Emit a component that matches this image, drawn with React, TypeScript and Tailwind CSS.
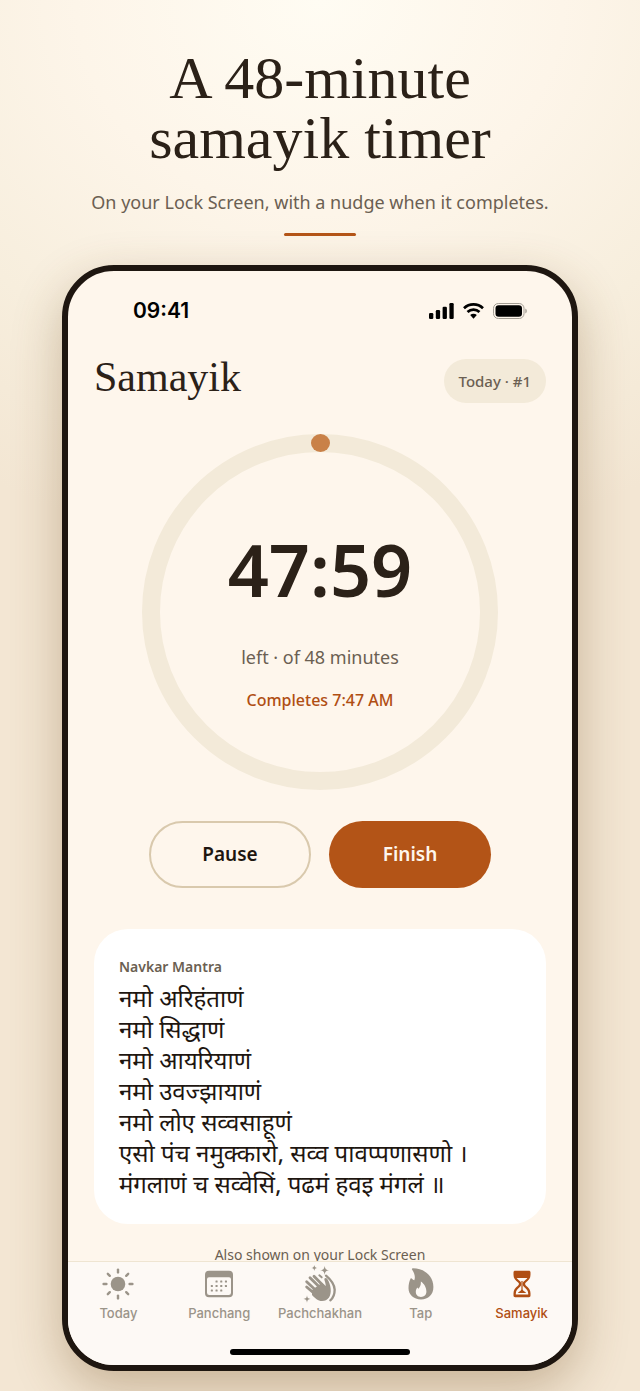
import type { ReactElement } from "react"
import clsx from "clsx"

interface Tab {
  label: string
  icon: ReactElement
  active?: boolean
}

const mantra: string[] = [
  "नमो अरिहंताणं",
  "नमो सिद्धाणं",
  "नमो आयरियाणं",
  "नमो उवज्झायाणं",
  "नमो लोए सव्वसाहूणं",
  "एसो पंच नमुक्कारो, सव्व पावप्पणासणो ।",
  "मंगलाणं च सव्वेसिं, पढमं हवइ मंगलं ॥",
]

function SunIcon() {
  const angles = [0, 45, 90, 135, 180, 225, 270, 315]
  return (
    <svg viewBox="0 0 32 32" className="size-8" fill="currentColor" aria-hidden="true">
      <circle cx="16" cy="16" r="7.3" />
      {angles.map((a) => (
        <rect key={a} x="14.8" y="0.4" width="2.4" height="5.2" rx="1.2" transform={`rotate(${a} 16 16)`} />
      ))}
    </svg>
  )
}

function CalendarIcon() {
  const dots = [
    [12.5, 11.5], [17.2, 11.5], [21.9, 11.5],
    [7.8, 16], [12.5, 16], [17.2, 16], [21.9, 16],
    [7.8, 20.5], [12.5, 20.5], [17.2, 20.5],
  ]
  return (
    <svg viewBox="0 0 30 28" className="h-7 w-[30px]" fill="currentColor" aria-hidden="true">
      <path
        fillRule="evenodd"
        d="M5 .7h20a4 4 0 0 1 4 4v18.600a4 4 0 0 1-4 4H5a4 4 0 0 1-4-4V4.700a4 4 0 0 1 4-4ZM5 7.300A2 2 0 0 0 3 9.300v13.400A2.300 2.300 0 0 0 5.300 25h19.400A2.300 2.300 0 0 0 27 22.700V9.300a2 2 0 0 0-2-2Z"
      />
      {dots.map(([x, y]) => (
        <rect key={`${x}-${y}`} x={x - 1} y={y - 1} width="2.1" height="2.1" rx="0.5" />
      ))}
    </svg>
  )
}

function ClapIcon() {
  return (
    <svg viewBox="20 10 108 117" className="h-[39px] w-9" fill="currentColor" aria-hidden="true">
      <path d="M57 13c1 6 3 8 9 9-6 1-8 3-9 9-1-6-3-8-9-9 6-1 8-3 9-9Z" />
      <path d="M88 15c1.500 10 4 12.500 14 14-10 1.500-12.500 4-14 14-1.500-10-4-12.500-14-14 10-1.500 12.500-4 14-14Z" />
      <path d="M35 104c1 8 3 10 11 11-8 1-10 3-11 11-1-8-3-10-11-11 8-1 10-3 11-11Z" />
      <g fill="none" stroke="currentColor" strokeWidth="8.5" strokeLinecap="round">
        <path d="M56 47 84 75" />
        <path d="M44 51 76 83" />
        <path d="M34 63 66 93" />
        <path d="M34 79 64 104" />
      </g>
      <path d="M50 88 80 66 91 76C92 69 87 60 87 55c1-4 6-4 9 0 5 8 9 18 10 29 2 22-8 37-26 37-12 0-21-8-30-18Z" />
      <g fill="none" stroke="currentColor" strokeLinecap="round">
        <path d="M72 44 79 50" strokeWidth="6" />
        <path d="M92 45C104 55 117 69 118 87c0 14-4 24-13 32" strokeWidth="7" />
      </g>
    </svg>
  )
}

function FlameIcon() {
  return (
    <svg viewBox="0 0 26 32" className="h-8 w-[26px]" fill="currentColor" aria-hidden="true">
      <path
        fillRule="evenodd"
        d="M4 1.500C3.600.8 4.100.3 5 .3 16 .3 25.400 7.800 25.400 19 25.400 26.600 20.300 31.400 13 31.400 5.700 31.400.5 26.800.5 20.300c0-3.800.8-7 2-9.500.4-.7 1.100-.6 1.500 0 .6.9 1.400 1.400 2.300 1.400C7.700 8.600 6.200 4.800 4 1.500ZM12.800 13.600c.4 3.700-1 5.500-2.200 7.200-.5-.2-.9-.6-1.200-1.200C8.300 21 7.800 22.300 7.800 23.700c0 3.300 2.200 5.200 5.200 5.200 3.200 0 5.400-2 5.400-5.300 0-4-2.200-7.900-5.600-10Z"
      />
    </svg>
  )
}

function HourglassIcon() {
  return (
    <svg viewBox="0 0 18 28" className="h-7 w-[18px]" fill="currentColor" aria-hidden="true">
      <path
        fillRule="evenodd"
        d="M2.200.8h13.600c1.100 0 1.700.7 1.700 1.700v2.200c0 3.700-1.700 5.300-4.700 7.900-1 .9-1 1.900 0 2.800 3 2.600 4.700 4.200 4.700 7.900v2.200c0 1-.6 1.700-1.700 1.700H2.200c-1.100 0-1.700-.7-1.700-1.700v-2.200c0-3.700 1.700-5.300 4.700-7.900 1-.9 1-1.900 0-2.800C2.200 10 .5 8.400.5 4.700V2.500C.5 1.500 1.100.8 2.200.8ZM3.600 8h10.800c-1 1.400-2.300 2.300-3.700 3.500-1.300 1.200-1.300 3.800 0 5 2.700 2.400 4.300 3.700 4.500 6.900v1.200H2.800v-1.200c.2-3.200 1.800-4.500 4.500-6.900 1.300-1.200 1.300-3.800 0-5C5.900 10.300 4.600 9.400 3.600 8Z"
      />
      <path d="M8.400 11h1.200v8.500c.4 1.400 2.500 2.200 3.600 3.500H4.800c1.100-1.300 3.200-2.100 3.600-3.500Z" />
    </svg>
  )
}

const tabs: Tab[] = [
  { label: "Today", icon: <SunIcon /> },
  { label: "Panchang", icon: <CalendarIcon /> },
  { label: "Pachchakhan", icon: <ClapIcon /> },
  { label: "Tap", icon: <FlameIcon /> },
  { label: "Samayik", icon: <HourglassIcon />, active: true },
]

function StatusBar() {
  return (
    <div className="flex h-20 items-center justify-between pl-[65px] pr-[45px] text-black">
      <span className="font-['Inter',sans-serif] text-[21px] leading-7 font-semibold">09:41</span>
      <div className="flex items-center gap-[9px]">
        <svg viewBox="0 0 25 16" className="h-4 w-[25px]" fill="currentColor" aria-hidden="true">
          <rect x="0" y="10" width="4.3" height="6" rx="1.2" />
          <rect x="6.8" y="7" width="4.3" height="9" rx="1.2" />
          <rect x="13.6" y="3.7" width="4.3" height="12.3" rx="1.2" />
          <rect x="20.4" y="0" width="4.3" height="16" rx="1.2" />
        </svg>
        <svg viewBox="0 0 21 16" className="h-4 w-[21px]" fill="none" stroke="currentColor" strokeWidth="2.7" aria-hidden="true">
          <path d="M1 5.200C6.300.2 14.700.2 20 5.200" />
          <path d="M4.500 9C8 5.700 13 5.700 16.500 9" />
          <path d="M7.200 12.100c1.900-1.800 4.700-1.800 6.600 0L10.500 15.700Z" fill="currentColor" stroke="none" />
        </svg>
        <svg viewBox="0 0 34 16" className="h-4 w-[34px]" aria-hidden="true">
          <rect x="0.5" y="0.5" width="30.5" height="15" rx="4.800" fill="none" stroke="#a39d94" />
          <rect x="2.5" y="2.3" width="26.5" height="11.4" rx="3.2" fill="currentColor" />
          <path d="M32.300 5.500c2 .8 2 4.200 0 5Z" fill="#a39d94" />
        </svg>
      </div>
    </div>
  )
}

function TimerRing() {
  return (
    <div className="mx-auto mt-[31px] grid size-[356px] place-items-center">
      <svg viewBox="0 0 356 356" className="col-start-1 row-start-1 size-full" aria-hidden="true">
        <circle cx="178" cy="178" r="169" fill="none" stroke="#f3ead9" strokeWidth="18" />
        <ellipse cx="178.5" cy="9" rx="9.5" ry="9" fill="#c98148" />
      </svg>
      <div className="col-start-1 row-start-1 flex flex-col items-center pt-5">
        <p className="text-[72px] leading-[78px] font-semibold text-[#2b2118]">47:59</p>
        <p className="mt-[35px] text-lg leading-7 text-[#6b5f52]">left · of 48 minutes</p>
        <p className="mt-[15px] text-base leading-7 font-medium text-[#b04e13]">Completes 7:47 AM</p>
      </div>
    </div>
  )
}

function TabBar() {
  return (
    <nav className="relative border-t border-[#efe5d2] bg-[#fdf9f5] pb-[10px]">
      <ul className="grid grid-cols-5">
        {tabs.map((tab) => (
          <li key={tab.label}>
            <a
              href="#"
              className={clsx("flex flex-col items-center", tab.active ? "text-[#b04e13]" : "text-[#9b9489]")}
            >
              <span className="flex h-[43px] items-center justify-center">{tab.icon}</span>
              <span className="font-['Inter',sans-serif] text-[13px] leading-4 font-medium">{tab.label}</span>
            </a>
          </li>
        ))}
      </ul>
      <div className="mx-auto mt-7 h-[6px] w-[180px] rounded-full bg-black" />
    </nav>
  )
}

export default function App() {
  return (
    <div className="bg-[radial-gradient(ellipse_640px_560px_at_50%_0%,#fffcf3_0%,#fdf5e9_38%,#f7eedd_70%,#f3e6d3_100%)] px-[62px] pt-12 pb-5 font-['Noto_Sans',sans-serif]">
      <header className="-mx-8 flex flex-col items-center text-center">
        <h1 className="font-['Liberation_Serif',serif] text-[60px] leading-[60px] text-[#2b2118]">
          A 48-minute
          <br />
          samayik timer
        </h1>
        <p className="mt-5 text-lg leading-7 text-[#6b5f52]">On your Lock Screen, with a nudge when it completes.</p>
        <div className="mt-[17px] h-[3px] w-[72px] rounded-full bg-[#b35417]" />
      </header>

      <main className="mt-[29px] overflow-hidden rounded-[52px] border-[6px] border-[#1e1610] bg-[#fef6ec] shadow-[0_18px_50px_rgba(110,70,25,0.32)]">
        <StatusBar />

        <div className="px-[26px] pt-2">
          <div className="flex items-start justify-between">
            <h2 className="font-['Liberation_Serif',serif] text-[42px] leading-9 text-[#2b2118]">Samayik</h2>
            <span className="rounded-full bg-[#f3ead9] px-[15px] py-[10px] text-[15px] leading-6 font-medium text-[#6b5f52]">
              Today · #1
            </span>
          </div>

          <TimerRing />

          <div className="mt-[31px] flex justify-center gap-[18px] text-[19px] font-semibold">
            <button className="h-[67px] w-[162px] rounded-full border-2 border-[#d9c9ad] text-[#1e1610]">Pause</button>
            <button className="h-[67px] w-[162px] rounded-full bg-[#b35417] text-[#fef6ec]">Finish</button>
          </div>

          <section className="mt-[41px] rounded-[34px] bg-white px-[25px] pt-[27px] pb-[21px]">
            <h3 className="text-sm leading-[22px] font-semibold text-[#6b5f52]">Navkar Mantra</h3>
            <div className="mt-2 font-['Noto_Sans_Devanagari','Noto_Sans',sans-serif] text-2xl leading-[31px] text-[#1e1610]" lang="hi">
              {mantra.map((line) => (
                <p key={line} className="whitespace-nowrap">{line}</p>
              ))}
            </div>
          </section>

          <p className="mt-[17px] -mb-2 text-center text-sm leading-7 text-[#6b5f52]">
            Also shown on your Lock Screen
          </p>
        </div>

        <TabBar />
      </main>
    </div>
  )
}
